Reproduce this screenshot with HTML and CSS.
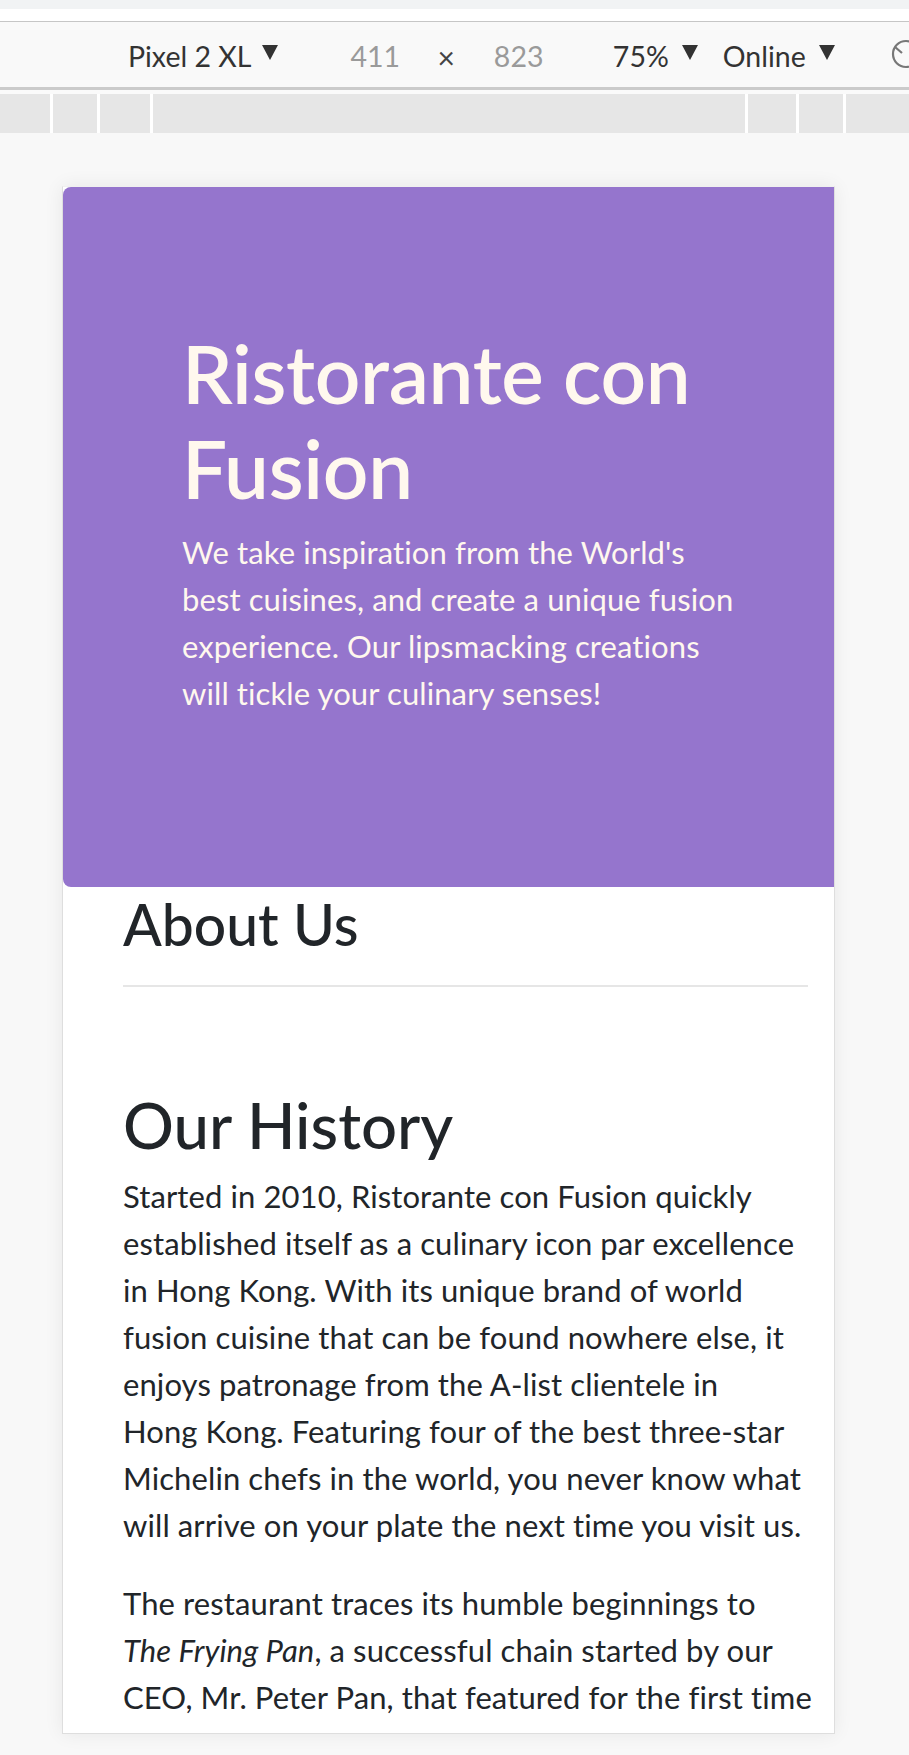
FILE: index.html
```html
<!DOCTYPE html>
<html lang="en">
<head>
<meta charset="utf-8">
<title>Ristorante con Fusion</title>
<link rel="stylesheet" href="styles.css">
</head>
<body>
<div class="chrome">
  <div class="strip"></div>
  <div class="whitebar"></div>
  <div class="toolbar">
    <span class="tb-text dev">Pixel 2 XL</span><span class="caret c1"></span>
    <span class="tb-dim dim-w">411</span><span class="times">×</span><span class="tb-dim dim-h">823</span>
    <span class="tb-text zoom">75%</span><span class="caret c2"></span>
    <span class="tb-text net">Online</span><span class="caret c3"></span>
    <svg class="rotate" width="34" height="34" viewBox="0 0 34 34" aria-hidden="true">
      <circle cx="17" cy="17" r="13" fill="none" stroke="#777" stroke-width="2.2"/>
      <path d="M6 10 L13 16 M28 24 L21 18" fill="none" stroke="#777" stroke-width="2.2"/>
    </svg>
  </div>
  <div class="gap"></div>
  <div class="ruler">
    <span></span><span></span><span></span><span></span><span></span><span></span><span></span>
  </div>
</div>
<main class="stage">
  <div class="device">
    <header class="jumbotron">
      <h1 class="brand-title">Ristorante con Fusion</h1>
      <p class="brand-lead">We take inspiration from the World's<br>best cuisines, and create a unique fusion<br>experience. Our lipsmacking creations<br>will tickle your culinary senses!</p>
    </header>
    <section class="content">
      <h2 class="about-title">About Us</h2>
      <hr class="divider">
      <h2 class="history-title">Our History</h2>
      <p class="history-text first">Started in 2010, Ristorante con Fusion quickly<br>established itself as a culinary icon par excellence<br>in Hong Kong. With its unique brand of world<br>fusion cuisine that can be found nowhere else, it<br>enjoys patronage from the A-list clientele in<br>Hong Kong. Featuring four of the best three-star<br>Michelin chefs in the world, you never know what<br>will arrive on your plate the next time you visit us.</p>
      <p class="history-text">The restaurant traces its humble beginnings to<br><em>The Frying Pan</em>, a successful chain started by our<br>CEO, Mr. Peter Pan, that featured for the first time</p>
    </section>
  </div>
</main>
</body>
</html>
```
FILE: styles.css
```css
html, body {
  margin: 0;
  padding: 0;
}
body {
  width: 909px;
  height: 1755px;
  overflow: hidden;
  background: #f8f8f8;
  font-family: "Lato", "Open Sans", sans-serif;
}

/* ---------- devtools chrome ---------- */
.strip {
  height: 9px;
  background: #f1f3f4;
}
.whitebar {
  height: 12px;
  background: #ffffff;
  border-bottom: 1px solid #c6c6c6;
}
.toolbar {
  box-sizing: border-box;
  height: 65px;
  padding: 4px 0 0 128px;
  background: #f9f9f9;
  border-bottom: 3px solid #cbcbcb;
  display: flex;
  align-items: center;
  overflow: hidden;
  white-space: nowrap;
  font-size: 28.5px;
  color: #333333;
}
.toolbar {
  height: 68px;
}
.tb-text, .tb-dim, .times {
  display: inline-block;
  line-height: 1;
}
.dev { width: 125px; }
.zoom { width: 57px; margin-left: 71px; }
.net { width: 85px; margin-left: 25px; }
.tb-dim { color: #9a9a9a; width: 48px; }
.dim-w { margin-left: 72px; }
.dim-h { margin-left: 39px; }
.times { margin-left: 39px; width: 19px; color: #444; font-size: 30px; }
.caret {
  display: inline-block;
  width: 0;
  height: 0;
  border-left: 8px solid transparent;
  border-right: 8px solid transparent;
  border-top: 15px solid #333333;
  margin-left: 11px;
  margin-top: -8px;
}
.c2, .c3 { margin-left: 13px; }
.rotate {
  flex: none;
  margin-left: 54px;
  margin-top: -6px;
}
.gap {
  height: 4px;
  background: #fafafa;
}
.ruler {
  height: 39px;
  display: grid;
  grid-template-columns: 50px 44px 50px 592px 48px 44px 1fr;
  column-gap: 3px;
  background: #ffffff;
}
.ruler span {
  background: #e6e6e6;
}

/* ---------- emulated page ---------- */
.stage {
  padding: 53px 0 0 62px;
}
.device {
  width: 771px;
  height: 1546px;
  background: #ffffff;
  border: 1px solid #dedede;
  border-top-color: #f0f0f0;
  box-shadow: 0 0 18px rgba(0, 0, 0, 0.07);
  overflow: hidden;
}
.jumbotron {
  box-sizing: border-box;
  height: 700px;
  padding: 139px 40px 0 119px;
  background: #9575cd;
  border-radius: 8px 0 0 8px;
  color: #fff8ee;
}
.brand-title {
  margin: 0;
  max-width: 564px;
  font-size: 80px;
  line-height: 95px;
  font-weight: 600;
  letter-spacing: -0.3px;
}
.brand-lead {
  margin: 13px 0 0;
  font-size: 31px;
  line-height: 47px;
  letter-spacing: 0.1px;
  white-space: nowrap;
}
.content {
  padding: 0 26px 0 60px;
  color: #212529;
}
.about-title {
  margin: 3px 0 0;
  font-size: 57px;
  line-height: 1.2;
  font-weight: 500;
}
.divider {
  margin: 27px 0 0;
  border: 0;
  border-top: 2px solid #e6e6e6;
}
.history-title {
  margin: 100px 0 0;
  font-size: 63.5px;
  line-height: 1.2;
  font-weight: 500;
}
.history-text {
  margin: 31px 0 0;
  font-size: 31px;
  line-height: 47px;
  letter-spacing: 0.1px;
  white-space: nowrap;
}
.history-text.first {
  margin-top: 9px;
}
```
